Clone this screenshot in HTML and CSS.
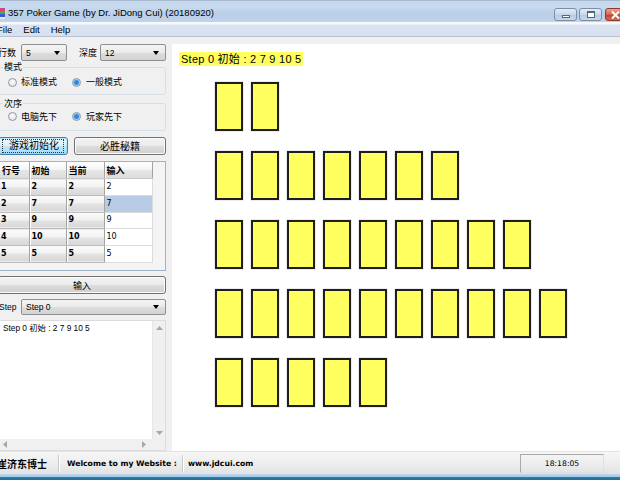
FILE: index.html
```html
<!DOCTYPE html>
<html>
<head>
<meta charset="utf-8">
<title>357 Poker Game</title>
<link rel="stylesheet" href="styles.css">
</head>
<body>
<div class="win">
  <div class="titlebar">
    <svg class="appicon" width="7" height="11" viewBox="0 0 7 11">
      <rect x="0" y="0" width="7" height="3" fill="#d2477a"/>
      <rect x="0" y="3" width="7" height="3" fill="#4aa84a"/>
      <rect x="0" y="6" width="7" height="3" fill="#3b5bc8"/>
      <rect x="0" y="9" width="7" height="2" fill="#e8e8e8"/>
    </svg>
    <span class="title">357 Poker Game (by Dr. JiDong Cui) (20180920)</span>
    <span class="spacer"></span>
    <span class="tb tb-min"><i></i></span>
    <span class="tb tb-max"><i></i></span>
    <span class="tb tb-close">
      <svg width="9" height="8" viewBox="0 0 9 8"><path d="M1 0.5 L8 7.5 M8 0.5 L1 7.5" stroke="#fff" stroke-width="2"/></svg>
    </span>
  </div>
  <div class="menubar">
    <span class="mi mi-file">File</span><span class="mi">Edit</span><span class="mi">Help</span>
  </div>
  <div class="client">
    <div class="left">
      <div class="toprow">
        <span class="lbl lbl-rows">行数</span>
        <div class="combo combo-rows"><span class="ctext">5</span><i class="arr"></i></div>
        <span class="lbl lbl-depth">深度</span>
        <div class="combo combo-depth"><span class="ctext">12</span><i class="arr"></i></div>
      </div>
      <fieldset class="grp grp1">
        <legend>模式</legend>
        <div class="radios">
          <span class="radio r-first"><i class="rb"></i>标准模式</span>
          <span class="radio"><i class="rb on"></i>一般模式</span>
        </div>
      </fieldset>
      <fieldset class="grp grp2">
        <legend>次序</legend>
        <div class="radios">
          <span class="radio r-first"><i class="rb"></i>电脑先下</span>
          <span class="radio"><i class="rb on"></i>玩家先下</span>
        </div>
      </fieldset>
      <div class="btnrow">
        <span class="btn btn-init focus"><span class="focusring">游戏初始化</span></span>
        <span class="btn btn-secret">必胜秘籍</span>
      </div>
      <div class="gridbox">
        <table class="grid">
          <thead>
            <tr><th class="c1">行号</th><th class="c2">初始</th><th class="c3">当前</th><th class="c4">输入</th></tr>
          </thead>
          <tbody>
            <tr><td class="h">1</td><td class="h">2</td><td class="h">2</td><td class="d">2</td></tr>
            <tr><td class="h">2</td><td class="h">7</td><td class="h">7</td><td class="d sel">7</td></tr>
            <tr><td class="h">3</td><td class="h">9</td><td class="h">9</td><td class="d">9</td></tr>
            <tr><td class="h">4</td><td class="h">10</td><td class="h">10</td><td class="d">10</td></tr>
            <tr><td class="h">5</td><td class="h">5</td><td class="h">5</td><td class="d">5</td></tr>
          </tbody>
        </table>
      </div>
      <span class="btn btn-input">输入</span>
      <div class="steprow">
        <span class="lbl lbl-step">Step</span>
        <div class="combo combo-step"><span class="ctext">Step 0</span><i class="arr"></i></div>
      </div>
      <div class="textbox">
        <div class="tb-main">
          <div class="tb-text">Step 0 初始 : 2 7 9 10 5</div>
          <div class="vscroll">
            <svg width="7" height="4" viewBox="0 0 7 4"><path d="M0 4 L3.5 0 L7 4 Z" fill="#a6a6a6"/></svg>
            <svg width="7" height="4" viewBox="0 0 7 4"><path d="M0 0 L7 0 L3.5 4 Z" fill="#a6a6a6"/></svg>
          </div>
        </div>
        <div class="hscroll">
          <div class="hs-track">
            <svg width="4" height="7" viewBox="0 0 4 7"><path d="M4 0 L4 7 L0 3.5 Z" fill="#a6a6a6"/></svg>
            <svg width="4" height="7" viewBox="0 0 4 7"><path d="M0 0 L4 3.5 L0 7 Z" fill="#a6a6a6"/></svg>
          </div>
          <div class="hs-corner"></div>
        </div>
      </div>
    </div>
    <div class="board">
      <div class="steplabel">Step 0 初始 : 2 7 9 10 5</div>
      <div class="rows">
        <div class="cardrow"><i class="card"></i><i class="card"></i></div>
        <div class="cardrow"><i class="card"></i><i class="card"></i><i class="card"></i><i class="card"></i><i class="card"></i><i class="card"></i><i class="card"></i></div>
        <div class="cardrow"><i class="card"></i><i class="card"></i><i class="card"></i><i class="card"></i><i class="card"></i><i class="card"></i><i class="card"></i><i class="card"></i><i class="card"></i></div>
        <div class="cardrow"><i class="card"></i><i class="card"></i><i class="card"></i><i class="card"></i><i class="card"></i><i class="card"></i><i class="card"></i><i class="card"></i><i class="card"></i><i class="card"></i></div>
        <div class="cardrow"><i class="card"></i><i class="card"></i><i class="card"></i><i class="card"></i><i class="card"></i></div>
      </div>
    </div>
  </div>
  <div class="statusbar">
    <span class="sp sp-author">崔济东博士</span>
    <span class="sep"></span>
    <span class="sp sp-welcome">Welcome to my Website :</span>
    <span class="sep"></span>
    <span class="sp sp-url">www.jdcui.com</span>
    <span class="spacer"></span>
    <span class="sp-time">18:18:05</span>
    <span class="grip"></span>
  </div>
  <div class="frame-bottom"></div>
</div>
</body>
</html>
```
FILE: styles.css
```css
* { box-sizing: border-box; }
html, body { margin: 0; padding: 0; }
body {
  width: 620px;
  height: 480px;
  overflow: hidden;
  background: #f0f0f0;
  color: #000;
  font-family: "Liberation Sans", "Noto Sans CJK SC", sans-serif;
  font-size: 9px;
}
.win {
  width: 620px;
  height: 480px;
  display: flex;
  flex-direction: column;
  overflow: hidden;
}

/* title bar */
.titlebar {
  flex: none;
  height: 22px;
  display: flex;
  align-items: flex-start;
  background: linear-gradient(#8d9db0 0, #c3d6ec 1px, #c9dbef 6px, #b9cfe8 14px, #bfd4eb 22px);
}
.appicon { flex: none; margin: 8px 0 0 -2px; }
.title {
  margin: 7px 0 0 3px;
  font-family: "Liberation Sans", sans-serif;
  font-size: 9.5px;
  line-height: 12px;
  color: #000;
}
.spacer { flex: 1; }
.tb {
  flex: none;
  height: 13px;
  margin-top: 8px;
  border: 1px solid #7b8fa8;
  border-radius: 3px;
  display: flex;
  align-items: center;
  justify-content: center;
}
.tb-min, .tb-max {
  width: 23px;
  background: linear-gradient(#e3ecf7, #c8d8eb 50%, #b5c9e1 51%, #c6d8ec);
  margin-right: 2px;
}
.tb-min i {
  display: block;
  width: 8px;
  height: 3px;
  margin-top: 4px;
  background: #fff;
  border: 1px solid #55657a;
}
.tb-max i {
  display: block;
  width: 8px;
  height: 7px;
  background: #fff;
  border: 1px solid #55657a;
  border-top-width: 2px;
  box-shadow: inset 0 0 0 1px #fff;
}
.tb-close {
  width: 30px;
  margin-left: 1px;
  margin-right: -15px;
  border-color: #8b3a2c;
  background: linear-gradient(#e8a594, #d4634e 50%, #c0402a 51%, #d66a4f);
  justify-content: flex-start;
  padding-left: 5px;
}

/* menu */
.menubar {
  flex: none;
  height: 15px;
  display: flex;
  align-items: center;
  background: linear-gradient(#f6f8fc 0, #f6f8fc 2px, #dbe3f2 3px, #d7e0f0 14px);
  border-bottom: 1px solid #b9c3d3;
  font-family: "Liberation Sans", sans-serif;
  font-size: 9.5px;
  padding-top: 1px;
}
.mi { margin-right: 11px; }
.mi-file { margin-left: -3px; }

/* client */
.client {
  flex: 1;
  display: flex;
  padding-top: 7px;
  min-height: 0;
}
.left {
  flex: none;
  width: 168px;
  margin-left: -2px;
  display: flex;
  flex-direction: column;
  font-family: "Liberation Sans", "Noto Sans CJK SC", sans-serif;
  font-size: 9px;
}
.toprow {
  display: flex;
  align-items: center;
  height: 17px;
}
.lbl { flex: none; font-size: 9px; line-height: 12px; }
.lbl-rows { width: 23px; }
.lbl-depth { width: 33px; padding-left: 12px; }
.combo {
  flex: none;
  height: 17px;
  border: 1px solid #8e8f8f;
  border-radius: 2px;
  background: linear-gradient(#f4f4f4, #ebebeb 50%, #dddddd 51%, #d3d3d3);
  display: flex;
  align-items: center;
  padding: 0 6px 0 4px;
}
.ctext { flex: 1; font-size: 8.5px; }
.arr {
  flex: none;
  width: 0;
  height: 0;
  border-left: 3.5px solid transparent;
  border-right: 3.5px solid transparent;
  border-top: 4px solid #000;
}
.combo-rows { width: 46px; }
.combo-depth { width: 66px; }

.grp {
  margin: 0;
  border: 1px solid #d5dfe5;
  border-radius: 3px;
  padding: 0;
  min-width: 0;
}
.grp legend {
  padding: 0 1px;
  margin-left: 4px;
  font-size: 9px;
  line-height: 10px;
}
.grp1 { margin-top: 1px; height: 33px; }
.grp2 { margin-top: 4px; height: 32px; }
.radios {
  display: flex;
  align-items: center;
  height: 12px;
  margin-top: 4px;
}
.grp2 .radios { margin-top: 2px; }
.radio {
  display: flex;
  align-items: center;
  font-size: 9px;
  line-height: 12px;
}
.r-first { width: 64px; margin-left: 9px; }
.rb {
  flex: none;
  width: 9px;
  height: 9px;
  border-radius: 50%;
  border: 1px solid #8d9aa8;
  background: radial-gradient(circle at 50% 40%, #fdfdfd, #dadde2);
  margin-right: 4px;
}
.rb.on {
  background: radial-gradient(circle, #2c7fd0 0, #3a8fdd 2px, #9cc8ef 3px, #e8eef4 4px);
  margin-right: 5px;
}

.btnrow {
  display: flex;
  margin-top: 6px;
  height: 18px;
}
.btn {
  flex: none;
  height: 18px;
  border: 1px solid #707070;
  border-radius: 3px;
  background: linear-gradient(#f2f2f2, #ebebeb 50%, #dddddd 51%, #cfcfcf);
  display: flex;
  align-items: center;
  justify-content: center;
  font-size: 10px;
  box-shadow: inset 0 0 0 1px #fcfcfc;
}
.btn-init {
  width: 70px;
  border-color: #3c7fb1;
  background: linear-gradient(#eaf6fd, #d9f0fc 50%, #bee6fd 51%, #a7d9f5);
  box-shadow: inset 0 0 0 1px #48d8fb40;
}
.focusring {
  border: 1px dotted #333;
  padding: 0 4px 0 6px;
  line-height: 12px;
}
.btn-secret { width: 92px; margin-left: 6px; }

.gridbox {
  margin-top: 6px;
  height: 111px;
  border: 1px solid #9db3c8;
  background: #f4f4f4;
  overflow: hidden;
}
.grid {
  border-collapse: collapse;
  table-layout: fixed;
  width: 153px;
  font-size: 9px;
}
.grid th, .grid td {
  padding: 0 0 0 2px;
  text-align: left;
  white-space: nowrap;
  overflow: hidden;
}
.grid th {
  height: 17px;
  font-weight: bold;
  background: linear-gradient(#ffffff, #f3f3f3 50%, #e6e6e6 51%, #dcdcdc);
  border-right: 1px solid #a3a3a3;
  border-bottom: 1px solid #c8c8c8;
  box-shadow: inset 1px 0 0 #fff;
}
.grid .c1 { width: 30px; padding-left: 3px; }
.grid .c2 { width: 37px; }
.grid .c3 { width: 38px; }
.grid .c4 { width: 48px; }
.grid td {
  height: 16.66px;
  line-height: 12px;
}
.grid td.h {
  font-family: "DejaVu Sans", sans-serif;
  font-weight: bold;
  font-size: 8px;
  background: linear-gradient(#fbfbfb, #f1f1f1 50%, #e4e4e4 51%, #d7d7d7);
  border-right: 1px solid #a3a3a3;
  border-bottom: 1px solid #bcbcbc;
  box-shadow: inset 1px 0 0 #fff;
}
.grid td.d {
  font-family: "DejaVu Sans", sans-serif;
  font-size: 8px;
  background: #fff;
  border-right: 1px solid #dcdcdc;
  border-bottom: 1px solid #dcdcdc;
}
.grid td.sel { background: #b8cce6; }

.btn-input {
  width: 168px;
  margin-top: 5px;
  font-size: 9px;
}
.steprow {
  display: flex;
  align-items: center;
  height: 16px;
  margin-top: 5px;
}
.lbl-step { width: 23px; font-size: 8.5px; padding-left: 1px; }
.combo-step { width: 145px; height: 16px; }

.textbox {
  margin-top: 5px;
  height: 131px;
  border: 1px solid #dcdcdc;
  background: #fff;
  display: flex;
  flex-direction: column;
}
.tb-main { flex: 1; display: flex; min-height: 0; }
.tb-text {
  flex: 1;
  padding: 1px 0 0 4px;
  font-size: 8.3px;
  line-height: 12px;
}
.vscroll {
  flex: none;
  width: 13px;
  background: #f0f0f0;
  border-left: 1px solid #e6e6e6;
  display: flex;
  flex-direction: column;
  align-items: center;
  justify-content: space-between;
  padding: 5px 0 4px;
}
.hscroll {
  flex: none;
  height: 11px;
  display: flex;
}
.hs-track {
  flex: 1;
  background: #f0f0f0;
  display: flex;
  align-items: center;
  justify-content: space-between;
  padding: 0 6px 0 4px;
}
.hs-corner { width: 13px; background: #f0f0f0; }

/* board */
.board {
  flex: 1;
  margin-left: 6px;
  background: #fff;
  padding: 8px 0 0 7px;
  display: flex;
  flex-direction: column;
  align-items: flex-start;
}
.steplabel {
  background: #ffff60;
  font-size: 11px;
  letter-spacing: 0.25px;
  line-height: 14px;
  height: 14px;
  padding: 0 2px;
  white-space: nowrap;
}
.rows {
  margin: 16px 0 0 36px;
  display: flex;
  flex-direction: column;
  gap: 20px;
}
.cardrow { display: flex; gap: 8px; height: 49px; }
.card {
  display: block;
  width: 28px;
  height: 49px;
  border: 2px solid #1e1e1e;
  background: #ffff60;
  box-shadow: 0 0 1px #888;
}

/* status bar */
.statusbar {
  flex: none;
  height: 23px;
  display: flex;
  align-items: center;
  background: linear-gradient(#f6f6f6, #ececec 60%, #e2e2e2);
  border-top: 1px solid #e3e3e3;
}
.sp { white-space: nowrap; }
.sp-author {
  margin-left: -3px;
  width: 61px;
  font-family: "Noto Sans CJK SC", sans-serif;
  font-weight: bold;
  font-size: 10px;
}
.sep {
  flex: none;
  width: 2px;
  height: 17px;
  border-left: 1px solid #c9c9c9;
  border-right: 1px solid #fff;
}
.sp-welcome {
  font-family: "DejaVu Sans", sans-serif;
  font-weight: bold;
  font-size: 7.7px;
  margin-left: 7px;
  width: 115px;
}
.sp-url {
  font-family: "DejaVu Sans", sans-serif;
  font-weight: bold;
  font-size: 7.7px;
  margin-left: 4px;
}
.sp-time {
  flex: none;
  width: 84px;
  height: 19px;
  border: 1px solid #a9a9a9;
  border-right-color: #e0e0e0;
  border-bottom-color: #e0e0e0;
  display: flex;
  align-items: center;
  justify-content: center;
  font-family: "DejaVu Sans", sans-serif;
  font-size: 7.7px;
}
.grip { flex: none; width: 16px; }
.frame-bottom {
  flex: none;
  height: 6px;
  background: linear-gradient(#bcd6ee 0, #a7c7e6 3px, #2f7ea8 3px, #1f6e99 6px);
}
```
